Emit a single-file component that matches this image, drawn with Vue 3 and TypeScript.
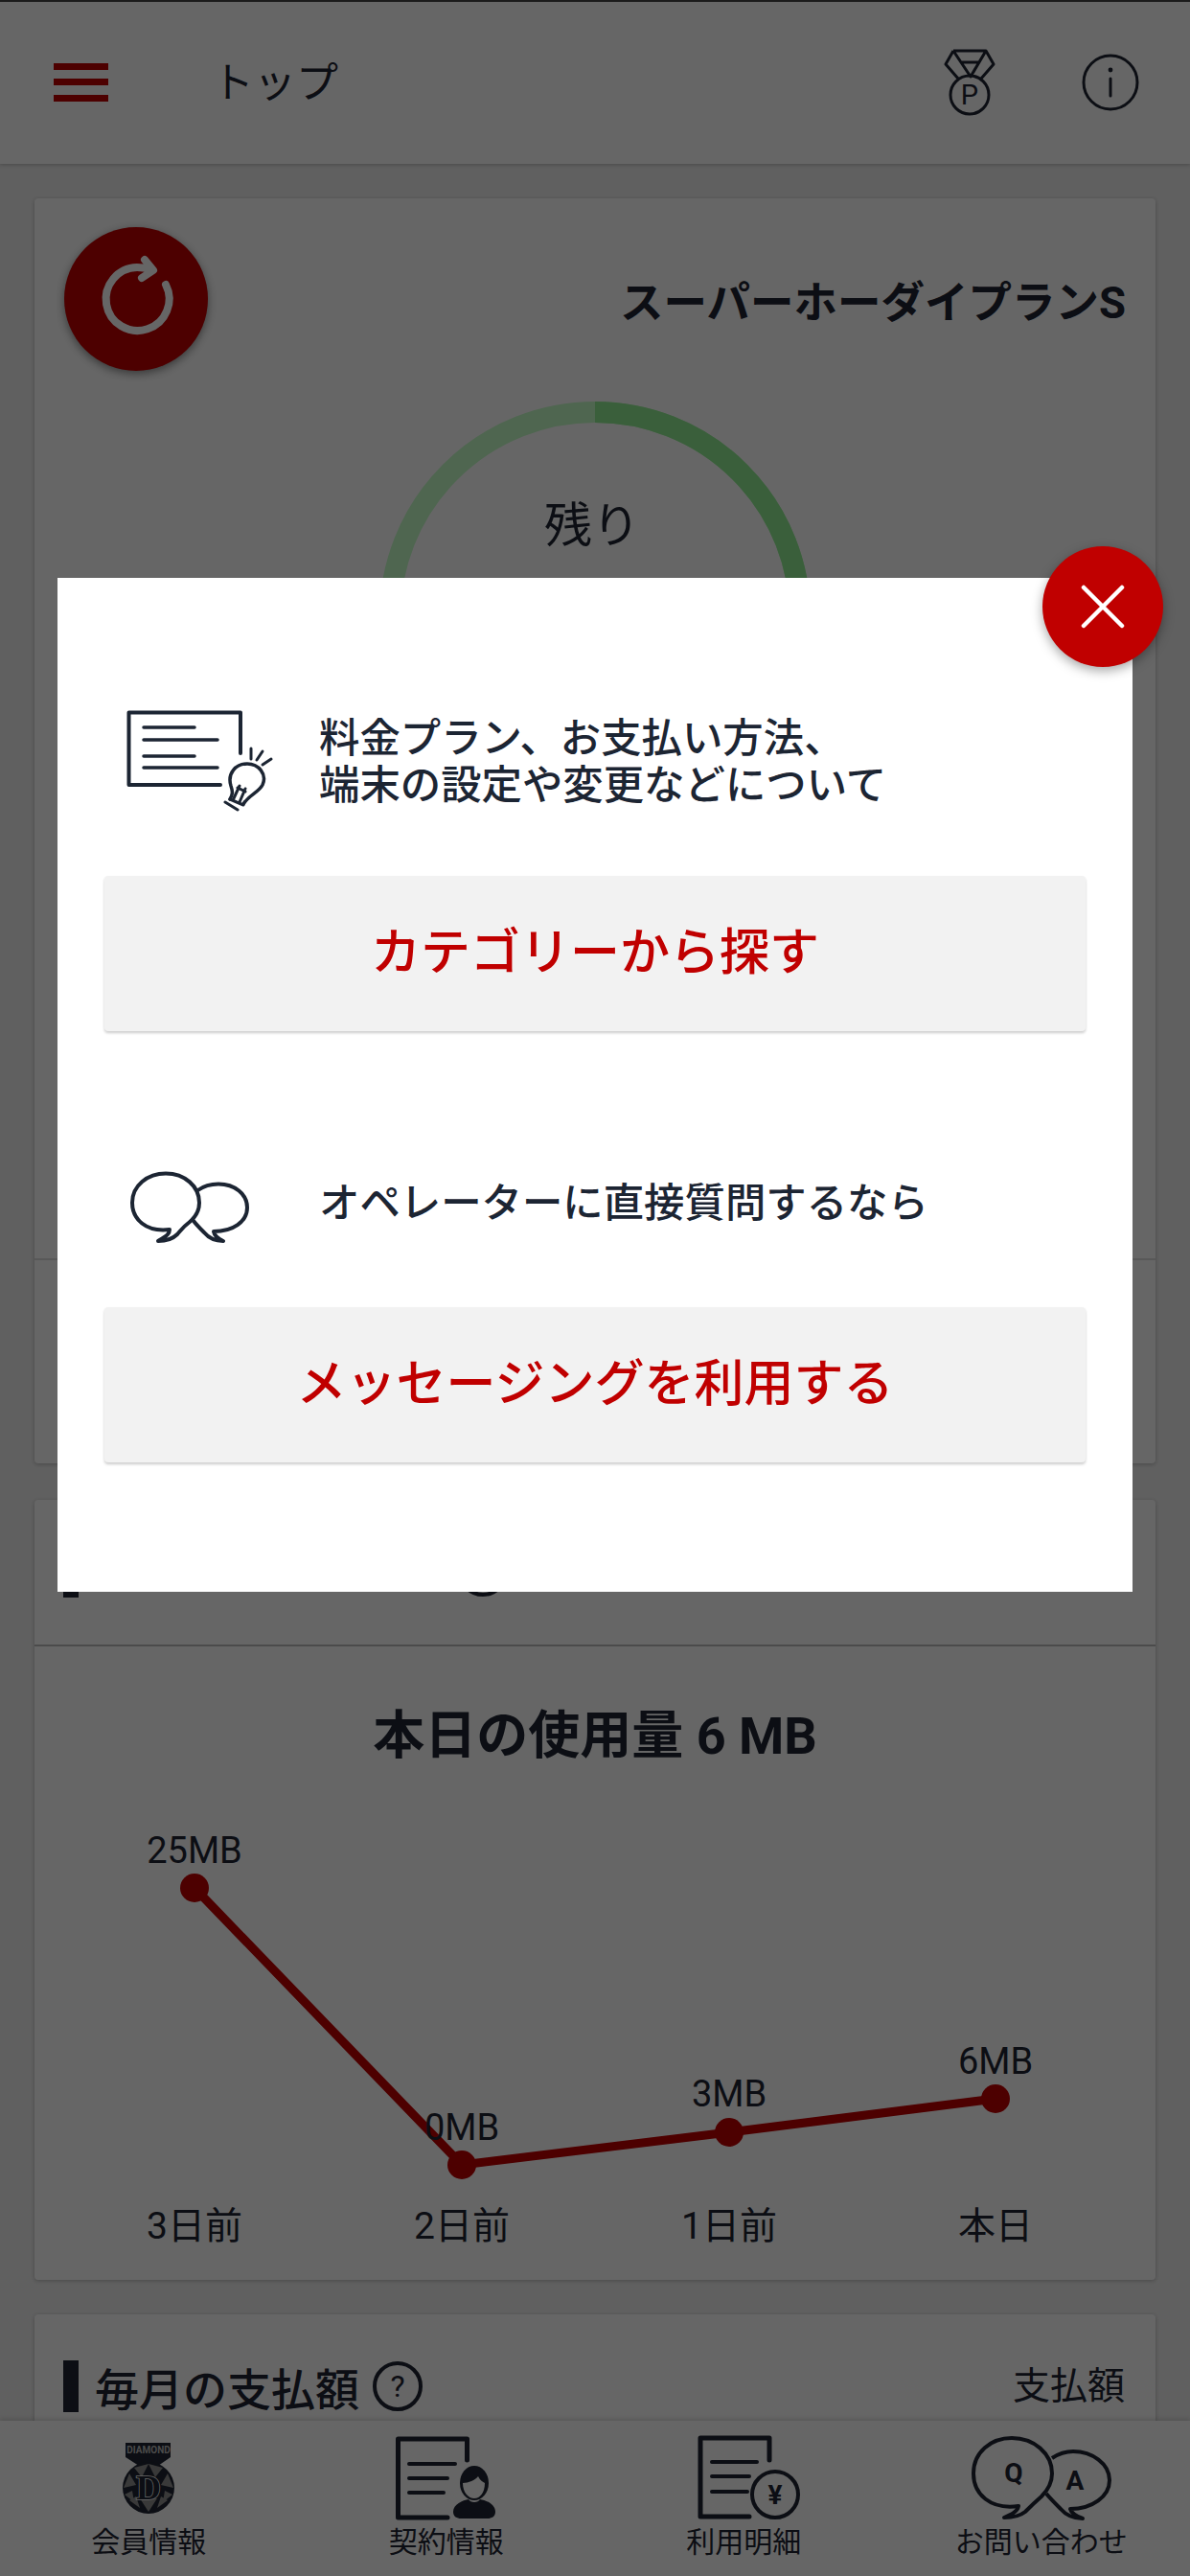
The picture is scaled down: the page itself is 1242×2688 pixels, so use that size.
<script setup lang="ts">
interface ChartPoint {
  day: string;
  label: string;
  x: number;
  y: number;
  labelY: number;
}

const chartPoints: ChartPoint[] = [
  { day: "3日前", label: "25MB", x: 167, y: 128, labelY: 89 },
  { day: "2日前", label: "0MB", x: 446, y: 417, labelY: 378 },
  { day: "1日前", label: "3MB", x: 725, y: 383, labelY: 343 },
  { day: "本日", label: "6MB", x: 1003, y: 348, labelY: 309 },
];

const linePoints = chartPoints.map((p) => `${p.x},${p.y}`).join(" ");

// facets of the diamond medal in the footer
const facets = [
  "75,30 90,34 82,44",
  "60,34 75,30 68,44",
  "95,40 101,55 88,52",
  "49,55 55,40 62,52",
  "90,70 100,62 92,58",
  "50,62 60,70 58,58",
  "66,66 75,80 84,66",
  "84,76 95,68 88,64",
  "55,68 66,76 62,64",
];
</script>

<template>
  <div class="screen">
    <header class="app-bar">
      <div class="menu"><i /><i /><i /></div>
      <span class="app-title">トップ</span>
      <svg class="medal" viewBox="0 0 60 75" width="60" height="75">
        <g fill="none" stroke="currentColor" stroke-width="3" stroke-linejoin="round">
          <path d="M12 4H46L54 18L41 33M12 4L4 18L17 33M12 4L30 31L46 4M21 16H38" />
          <circle cx="29" cy="50" r="20" />
        </g>
        <text x="29" y="60" text-anchor="middle" class="medal-p">P</text>
      </svg>
      <svg class="info" viewBox="0 0 60 60" width="60" height="60">
        <circle cx="30" cy="30" r="28" fill="none" stroke="currentColor" stroke-width="3" />
        <circle cx="30" cy="17" r="2.4" fill="currentColor" />
        <path d="M30 26V44" stroke="currentColor" stroke-width="3" stroke-linecap="round" />
      </svg>
    </header>

    <main class="content">
      <section class="card plan-card">
        <div class="plan">
          <div class="plan-head">
            <button class="refresh">
              <svg viewBox="0 0 150 150" width="150" height="150">
                <path d="M106 60A33 33 0 1 1 76 42C81 42 86 43 90 44" fill="none" stroke="#fff" stroke-width="8" stroke-linecap="round" />
                <path d="M84 34L93 45L81 53" fill="none" stroke="#fff" stroke-width="8" stroke-linecap="round" stroke-linejoin="round" />
              </svg>
            </button>
            <h2 class="plan-name">スーパーホーダイプランS</h2>
          </div>
          <svg class="ring" viewBox="0 0 450 450" width="450" height="450">
            <circle cx="225" cy="225" r="214" fill="none" stroke="#c5ffc8" stroke-width="22" />
            <path d="M225 11A214 214 0 0 1 439 225" fill="none" stroke="#91ed93" stroke-width="22" />
            <text x="222" y="130" text-anchor="middle" dominant-baseline="central" class="ring-label">残り</text>
          </svg>
        </div>
        <div class="plan-extra" />
      </section>

      <section class="card">
        <div class="section-head">
          <h2 class="section-title"><i class="title-bar" /><span class="title-covered" /></h2>
          <svg class="help" viewBox="0 0 54 54" width="54" height="54">
            <circle cx="27" cy="27" r="24" fill="none" stroke="currentColor" stroke-width="4" />
            <text x="27" y="38" text-anchor="middle" class="help-mark">?</text>
          </svg>
        </div>
        <div class="usage">
          <h3 class="usage-title">本日の使用量 6 MB</h3>
          <svg class="chart" viewBox="0 0 1170 537" width="1170" height="537">
            <polyline :points="linePoints" fill="none" stroke="#c00000" stroke-width="9" />
            <g v-for="p in chartPoints" :key="p.day">
              <circle :cx="p.x" :cy="p.y" r="15" fill="#c00000" />
              <text :x="p.x" :y="p.labelY" text-anchor="middle" dominant-baseline="central" class="chart-value">{{ p.label }}</text>
              <text :x="p.x" y="481" text-anchor="middle" dominant-baseline="central" class="chart-day">{{ p.day }}</text>
            </g>
          </svg>
        </div>
      </section>

      <section class="card">
        <div class="section-head">
          <h2 class="section-title"><i class="title-bar" />毎月の支払額</h2>
          <svg class="help" viewBox="0 0 54 54" width="54" height="54">
            <circle cx="27" cy="27" r="24" fill="none" stroke="currentColor" stroke-width="4" />
            <text x="27" y="38" text-anchor="middle" class="help-mark">?</text>
          </svg>
          <span class="pay-label">支払額</span>
        </div>
      </section>
    </main>

    <nav class="tabs">
      <a class="tab">
        <svg viewBox="0 0 150 90" width="150" height="90">
          <path d="M51 8H98V23L85 32H65L51 23Z" fill="#1e2532" />
          <text x="75" y="19" text-anchor="middle" class="diamond-text">DIAMOND</text>
          <circle cx="75" cy="55" r="27" fill="#1e2532" />
          <polygon v-for="f in facets" :key="f" :points="f" fill="#8f8f8f" />
          <text x="75" y="67" text-anchor="middle" class="diamond-d">D</text>
        </svg>
        <span>会員情報</span>
      </a>
      <a class="tab">
        <svg viewBox="0 0 150 90" width="150" height="90">
          <path d="M96.5 26V4H24.5V86H76" fill="none" stroke="#1e2532" stroke-width="5" stroke-linecap="round" stroke-linejoin="round" />
          <path d="M36 30H84M36 45H76M36 60H72" fill="none" stroke="#1e2532" stroke-width="4" stroke-linecap="round" />
          <ellipse cx="104" cy="50" rx="15" ry="18" fill="#1e2532" />
          <path d="M92 50C98 50 105 47 108 43C110 47 113 49 115 50C115 60 110 66 104 66C98 66 92 60 92 50Z" fill="#fff" />
          <path d="M82 80C82 72 92 68 98 67C100 71 108 71 110 67C116 68 126 72 126 80C126 85 122 87 118 87H90C86 87 82 85 82 80Z" fill="#1e2532" />
        </svg>
        <span>契約情報</span>
      </a>
      <a class="tab">
        <svg viewBox="0 0 150 90" width="150" height="90">
          <path d="M102 26V3H30V85H81" fill="none" stroke="#1e2532" stroke-width="5" stroke-linecap="round" stroke-linejoin="round" />
          <path d="M42 28H89M42 43H81M42 59H79" fill="none" stroke="#1e2532" stroke-width="4" stroke-linecap="round" />
          <circle cx="108" cy="62" r="24" fill="#fff" stroke="#1e2532" stroke-width="4" />
          <text x="108" y="72" text-anchor="middle" class="yen">¥</text>
        </svg>
        <span>利用明細</span>
      </a>
      <a class="tab">
        <svg viewBox="0 0 150 90" width="150" height="90">
          <path d="M51 74C22 78 4 62 4 40C4 18 22 3 44 3C67 3 86 19 86 40C86 50 82 57 75 64C67 71 62 76 58 80C53 84 45 86 36 86C43 83 50 80 51 74Z" fill="none" stroke="#1e2532" stroke-width="4" stroke-linejoin="round" />
          <path d="M86 24C92 20 100 17 108 17C128 17 146 30 146 47C146 64 128 77 105 77C106 81 112 85 118 87C108 87 101 84 95 77C90 72 84 66 80 61" fill="none" stroke="#1e2532" stroke-width="4" stroke-linejoin="round" />
          <text x="46" y="49" text-anchor="middle" class="qa">Q</text>
          <text x="110" y="57" text-anchor="middle" class="qa">A</text>
        </svg>
        <span>お問い合わせ</span>
      </a>
    </nav>

    <div class="overlay">
      <div class="modal">
        <button class="close">
          <svg viewBox="0 0 46 46" width="46" height="46">
            <path d="M3 3L43 43M43 3L3 43" stroke="#fff" stroke-width="4.5" stroke-linecap="round" />
          </svg>
        </button>

        <div class="modal-row first">
          <svg viewBox="0 0 190 150" width="190" height="150">
            <g fill="none" stroke="#1c2533" stroke-linecap="round" stroke-linejoin="round">
              <path d="M141 76V33.5H24.5V109H120" stroke-width="4" />
              <path d="M40 49H93M40 62H117M40 79H93M40 91H117" stroke-width="3.5" />
              <path d="M152 71V82M164 74L158 83M173 82L164 88" stroke-width="3" />
              <path d="M130 124C133 119 133 116 131 110C127 97 136 87 148 87C160 87 169 98 164 109C160 117 150 119 144 129" stroke-width="3.5" />
              <path d="M125 127L138 135M130 124L144 130M134 123L140 110M140 127L146 113M138 112L146 116" stroke-width="3" />
            </g>
          </svg>
          <p class="row-text two-line">料金プラン、お支払い方法、<br />端末の設定や変更などについて</p>
        </div>
        <button class="action">カテゴリーから探す</button>

        <div class="modal-row second">
          <svg viewBox="0 0 190 130" width="190" height="130">
            <g fill="none" stroke="#1c2533" stroke-width="4" stroke-linejoin="round" stroke-linecap="round">
              <path d="M67 93C42 96 28 82 28 65C28 47 44 34.5 63 34.5C83 34.5 98 48 98 65C98 74 94 80 88 85C80 91 78 95 75 98C70 103 62 105 55 105C61 101 67 99 67 93Z" />
              <path d="M96.5 52C102 48 110 45.5 118 45.5C135 45.5 148 56 148 70C148 85 133 95 113 95C114 100 118 103 123 105C114 105 108 102 103 96C99 92 95 88 92 84" />
            </g>
          </svg>
          <p class="row-text">オペレーターに直接質問するなら</p>
        </div>
        <button class="action">メッセージングを利用する</button>
      </div>
    </div>
  </div>
</template>

<style scoped>
.screen {
  position: relative;
  width: 1242px;
  height: 2688px;
  overflow: hidden;
  display: flex;
  flex-direction: column;
  background: #f0f0f0;
  color: #1e2532;
  font-family: Roboto, "Noto Sans CJK JP", sans-serif;
}

.app-bar {
  height: 171px;
  box-sizing: border-box;
  flex-shrink: 0;
  display: flex;
  align-items: center;
  padding: 0 53px 2px 56px;
  background: #fff;
  border-top: 2px solid #444;
  box-shadow: 0 1px 4px rgba(0, 0, 0, 0.25);
  position: relative;
}
.menu {
  width: 57px;
  height: 40px;
  display: flex;
  flex-direction: column;
  justify-content: space-between;
}
.menu i {
  display: block;
  height: 7px;
  background: #c00000;
}
.app-title {
  margin-left: 108px;
  margin-bottom: 5px;
  font-size: 44px;
  flex: 1;
}
.medal {
  margin-right: 86px;
  margin-top: 2px;
}

.content {
  flex: 1;
  min-height: 0;
  overflow: hidden;
  padding: 36px 36px 0;
  display: flex;
  flex-direction: column;
  gap: 36px;
}
.card {
  flex-shrink: 0;
  background: #fff;
  border-radius: 4px;
  box-shadow: 0 1px 4px rgba(0, 0, 0, 0.25);
}
.plan-card {
  margin-bottom: 2px;
}

.plan {
  height: 1108px;
  box-sizing: border-box;
  padding: 30px 31px 0 31px;
  border-bottom: 2px solid #ddd;
  display: flex;
  flex-direction: column;
}
.plan-head {
  display: flex;
  align-items: center;
  justify-content: space-between;
}
.plan-name {
  margin: 0;
  font-size: 45.5px;
  font-weight: 700;
}
.refresh {
  all: unset;
  width: 150px;
  height: 150px;
  border-radius: 50%;
  background: #c00000;
  box-shadow: 0 3px 10px rgba(0, 0, 0, 0.45);
}
.refresh svg {
  display: block;
}
.ring {
  display: block;
  margin: 32px 0 0 329px;
}
.ring-label {
  font-size: 50px;
  fill: #1e2532;
}
.plan-extra {
  height: 212px;
}

.section-head {
  height: 151px;
  box-sizing: border-box;
  padding: 48px 32px 0 30px;
  display: flex;
  align-items: flex-start;
}
.section-title {
  margin: 0;
  display: flex;
  align-items: center;
  height: 54px;
  font-size: 46px;
  font-weight: 500;
  white-space: nowrap;
}
.title-bar {
  width: 16px;
  height: 54px;
  background: #1e2532;
  margin-right: 17px;
}
/* the words of this heading lie under the modal in the reference */
.title-covered {
  width: 365px;
}
.help {
  margin-left: 13px;
}
.help-mark {
  font-size: 32px;
  fill: currentColor;
}
.pay-label {
  margin-left: auto;
  font-size: 39px;
  line-height: 54px;
}

.usage {
  border-top: 2px solid #bbb;
}
.usage-title {
  margin: 0;
  padding-top: 64px;
  font-size: 54px;
  line-height: 60px;
  font-weight: 700;
  text-align: center;
}
.chart {
  display: block;
}
.chart-value {
  font-size: 38px;
  fill: #1e2532;
}
.chart-day {
  font-size: 39px;
  fill: #1e2532;
}

.tabs {
  height: 162px;
  flex-shrink: 0;
  box-sizing: border-box;
  padding-top: 15px;
  display: grid;
  grid-template-columns: repeat(4, 1fr);
  background: #fff;
  box-shadow: 0 -2px 5px rgba(0, 0, 0, 0.15);
  position: relative;
}
.tab {
  display: flex;
  flex-direction: column;
  align-items: center;
  font-size: 30px;
  line-height: 40px;
}
.tab svg {
  display: block;
  margin-bottom: 2px;
}
.diamond-text {
  font-size: 10px;
  font-weight: 700;
  fill: #bbb;
}
.diamond-d {
  font-family: "Liberation Serif", serif;
  font-size: 36px;
  font-weight: 700;
  fill: #1e2532;
  stroke: #fff;
  stroke-width: 1.5px;
  paint-order: stroke;
}
.yen {
  font-size: 28px;
  font-weight: 700;
  fill: #1e2532;
}
.qa {
  font-size: 28px;
  font-weight: 700;
  fill: #1e2532;
}
.medal-p {
  font-size: 29px;
  fill: currentColor;
}

.overlay {
  position: absolute;
  inset: 0;
  background: rgba(0, 0, 0, 0.6);
}
.modal {
  position: relative;
  box-sizing: border-box;
  width: 1122px;
  height: 1058px;
  margin: 603px 0 0 60px;
  padding: 107px 49px 0;
  background: #fff;
}
.close {
  all: unset;
  position: absolute;
  top: -33px;
  right: -32px;
  width: 126px;
  height: 126px;
  border-radius: 50%;
  background: #c00000;
  box-shadow: 0 4px 12px rgba(0, 0, 0, 0.35);
  display: flex;
  align-items: center;
  justify-content: center;
}
.modal-row {
  display: flex;
  align-items: center;
  gap: 33px;
  margin-left: 1px;
}
.modal-row.second {
  margin-top: 114px;
}
.modal-row svg {
  flex-shrink: 0;
  display: block;
}
.row-text {
  margin: 0;
  font-size: 42.4px;
  line-height: 49px;
  font-weight: 500;
  color: #1c2533;
}
.two-line {
  margin-top: 20px;
}
.action {
  all: unset;
  display: block;
  box-sizing: border-box;
  width: 100%;
  height: 162px;
  line-height: 160px;
  text-align: center;
  font-size: 52px;
  font-weight: 500;
  color: #c00000;
  background: #f2f2f2;
  border-radius: 4px;
  box-shadow: 0 2px 3px rgba(0, 0, 0, 0.2);
}
.first + .action {
  margin-top: 54px;
}
.second + .action {
  margin-top: 44px;
}
</style>
